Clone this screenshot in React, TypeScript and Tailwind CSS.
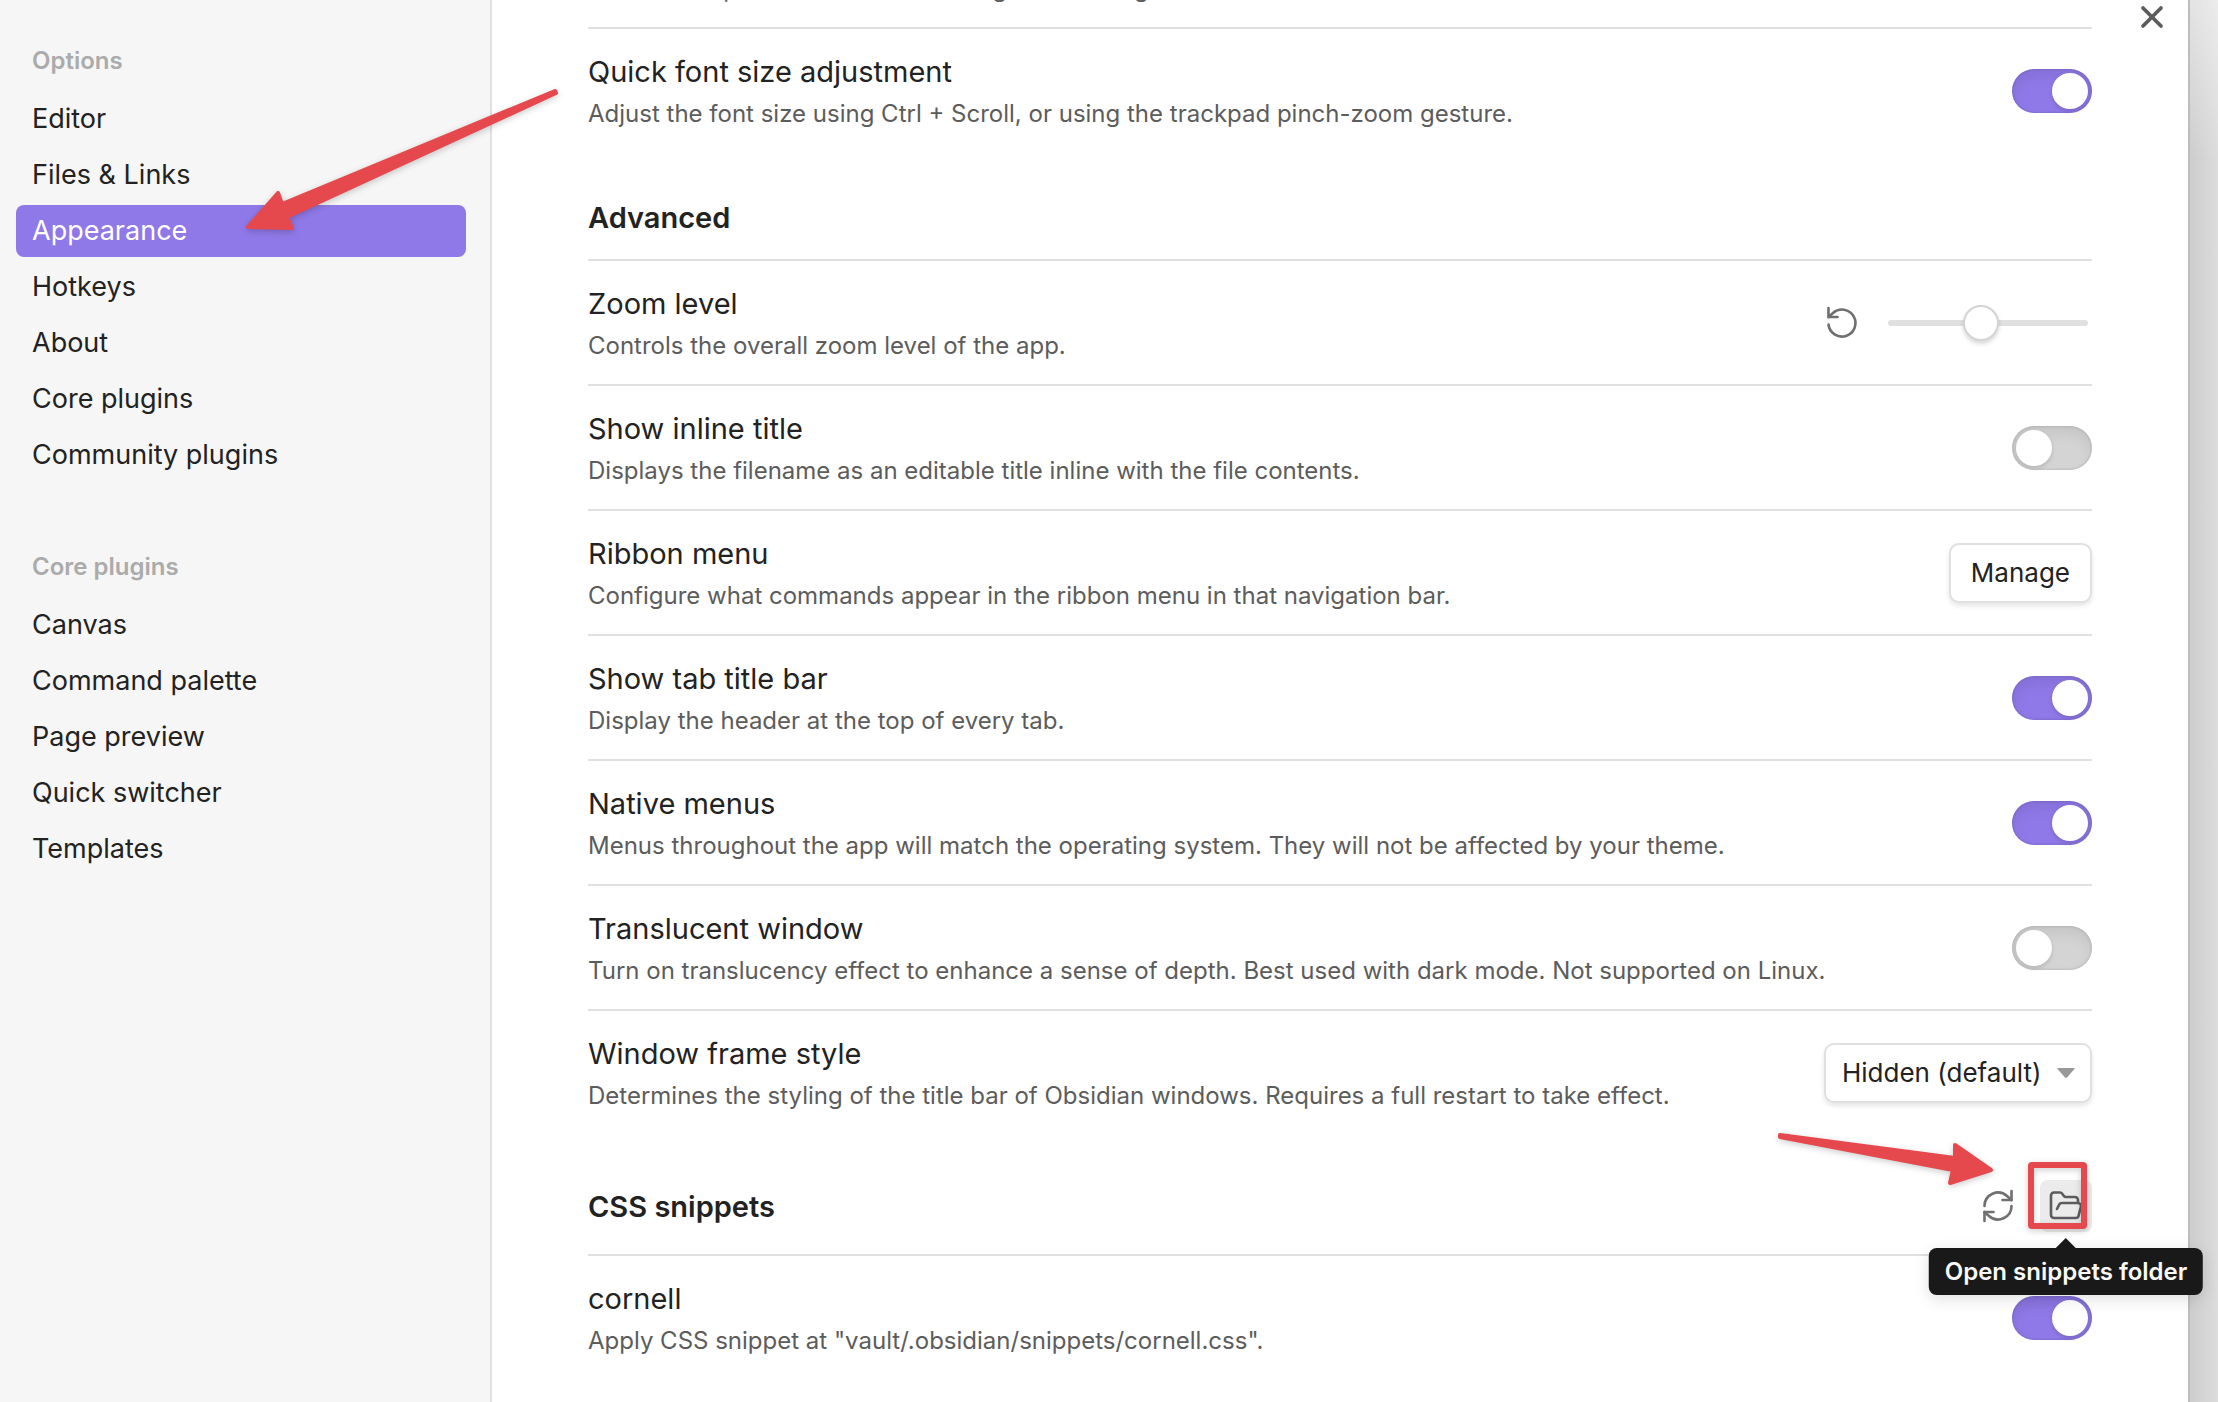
import { useState } from "react";
import type { ReactNode } from "react";
import { X } from "lucide-react";

const optionItems = ["Editor", "Files & Links", "Appearance", "Hotkeys", "About", "Core plugins", "Community plugins"];
const pluginItems = ["Canvas", "Command palette", "Page preview", "Quick switcher", "Templates"];

function NavGroup({ title, items, active }: { title: string; items: string[]; active?: string }) {
  return (
    <section>
      <h2 className="mb-2 px-4 py-2 text-2xl/[32px] font-semibold text-[#ababab]">{title}</h2>
      <ul className="flex flex-col gap-1">
        {items.map((item) => (
          <li key={item}>
            <a
              href="#"
              aria-current={item === active ? "page" : undefined}
              className={
                item === active
                  ? "block rounded-lg bg-[#8f79e8] px-4 py-2 text-[27px]/[36px] text-white"
                  : "block rounded-lg px-4 py-2 text-[27px]/[36px] text-[#222222]"
              }
            >
              {item}
            </a>
          </li>
        ))}
      </ul>
    </section>
  );
}

function Setting({ name, desc, children }: { name: string; desc: string; children?: ReactNode }) {
  return (
    <div className="flex items-center justify-between border-t-2 border-[#e0e0e0] py-[23px]">
      <div>
        <h3 className="text-[29px]/[39px] text-[#222222]">{name}</h3>
        <p className="mt-[7px] text-2xl/[31px] text-[#5c5c5c]">{desc}</p>
      </div>
      <div className="flex shrink-0 items-center">{children}</div>
    </div>
  );
}

function Toggle({ label, initial = false }: { label: string; initial?: boolean }) {
  const [on, setOn] = useState(initial);
  return (
    <input
      type="checkbox"
      role="switch"
      aria-label={label}
      checked={on}
      onChange={() => setOn(!on)}
      className="flex h-11 w-20 appearance-none items-center rounded-full bg-[#d4d4d4] p-1 shadow-[inset_0_8px_14px_rgba(0,0,0,0.07),inset_0_0_3px_rgba(0,0,0,0.2)] before:size-9 before:rounded-full before:bg-white before:shadow-[0_2px_4px_rgba(0,0,0,0.15)] checked:bg-[#8f79e8] checked:before:translate-x-9"
    />
  );
}

function StrokeIcon({ children }: { children: ReactNode }) {
  return (
    <svg viewBox="0 0 24 24" className="size-9 fill-none stroke-current stroke-[1.75]" strokeLinecap="round" strokeLinejoin="round" aria-hidden="true">
      {children}
    </svg>
  );
}

function SnippetTooltip() {
  return (
    <div role="tooltip" className="absolute top-full left-1/2 z-10 mt-4 -translate-x-1/2 rounded-lg bg-[#191919] px-4 py-2 text-2xl/[31px] font-semibold whitespace-nowrap text-[#fafafa] shadow-[0_4px_16px_rgba(0,0,0,0.12)]">
      <svg viewBox="0 0 20 10" className="absolute -top-[10px] left-1/2 h-[10px] w-5 -translate-x-1/2 fill-[#191919]" aria-hidden="true">
        <path d="M0 10L10 0l10 10z" />
      </svg>
      Open snippets folder
    </div>
  );
}

function Annotations() {
  return (
    <svg viewBox="0 0 2218 1402" className="pointer-events-none absolute top-0 left-0 h-[1402px] w-[2218px] fill-[#e5484d] stroke-[#e5484d] drop-shadow-[0_2px_3px_rgba(0,0,0,0.2)]" strokeWidth="4" strokeLinejoin="round" aria-hidden="true">
      <path d="M555 91L282 204l-4-11-30 34 44 1-5-11L556 93z" />
      <path d="M1780 1135L1955 1158v-13l36 25-41 13 3-13L1780 1137z" />
      <rect x="2031" y="1165" width="53" height="61" rx="1" fill="none" strokeWidth="6" />
    </svg>
  );
}

export default function App() {
  const [zoom, setZoom] = useState(46);
  return (
    <div className="relative flex h-screen overflow-hidden bg-white font-['Inter',sans-serif]">
      <nav aria-label="Settings" className="flex w-[492px] shrink-0 flex-col gap-[62px] border-r-2 border-[#e0e0e0] bg-[#f6f6f6] pt-[37px] pr-6 pl-4">
        <NavGroup title="Options" items={optionItems} active="Appearance" />
        <NavGroup title="Core plugins" items={pluginItems} />
      </nav>

      <main className="relative min-w-0 flex-1 bg-white px-24">
        <button type="button" aria-label="Close" className="absolute top-[-1px] right-[18px] text-[#5c5c5c]">
          <X className="size-9" strokeWidth={2.5} />
        </button>

        <div className="-mt-[98px]">
          <Setting name="Font size" desc="Font size in pixels that affects editing and reading views." />
          <Setting name="Quick font size adjustment" desc="Adjust the font size using Ctrl + Scroll, or using the trackpad pinch-zoom gesture.">
            <Toggle label="Quick font size adjustment" initial />
          </Setting>

          <h2 className="pt-[46px] pb-[22px] text-[29px]/[39px] font-semibold text-[#222222]">Advanced</h2>

          <Setting name="Zoom level" desc="Controls the overall zoom level of the app.">
            <button type="button" aria-label="Restore default" className="mr-5 p-2 text-[#707070]">
              <StrokeIcon>
                <path d="M3 2v6h6" />
                <path d="M3 13a9 9 0 1 0 3-7.7L3 8" />
              </StrokeIcon>
            </button>
            <input
              type="range"
              aria-label="Zoom level"
              value={zoom}
              onChange={(e) => setZoom(Number(e.target.value))}
              className="mr-1 h-[6px] w-[200px] appearance-none rounded-full bg-[#e0e0e0] [&::-webkit-slider-thumb]:size-9 [&::-webkit-slider-thumb]:appearance-none [&::-webkit-slider-thumb]:rounded-full [&::-webkit-slider-thumb]:border-2 [&::-webkit-slider-thumb]:border-[#d4d4d4] [&::-webkit-slider-thumb]:bg-white [&::-webkit-slider-thumb]:shadow-[0_3px_4px_rgba(0,0,0,0.15)]"
            />
          </Setting>
          <Setting name="Show inline title" desc="Displays the filename as an editable title inline with the file contents.">
            <Toggle label="Show inline title" />
          </Setting>
          <Setting name="Ribbon menu" desc="Configure what commands appear in the ribbon menu in that navigation bar.">
            <button type="button" className="h-15 rounded-[10px] border-2 border-[#e0e0e0] bg-white px-5 text-[26px]/[34px] text-[#222222] shadow-[0_3px_5px_rgba(0,0,0,0.1)]">
              Manage
            </button>
          </Setting>
          <Setting name="Show tab title bar" desc="Display the header at the top of every tab.">
            <Toggle label="Show tab title bar" initial />
          </Setting>
          <Setting name="Native menus" desc="Menus throughout the app will match the operating system. They will not be affected by your theme.">
            <Toggle label="Native menus" initial />
          </Setting>
          <Setting name="Translucent window" desc="Turn on translucency effect to enhance a sense of depth. Best used with dark mode. Not supported on Linux.">
            <Toggle label="Translucent window" />
          </Setting>
          <Setting name="Window frame style" desc="Determines the styling of the title bar of Obsidian windows. Requires a full restart to take effect.">
            <div className="relative flex items-center">
              <select aria-label="Window frame style" className="h-15 appearance-none rounded-[10px] border-2 border-[#e0e0e0] bg-white pr-12 pl-4 text-[26px]/[34px] text-[#222222] shadow-[0_3px_5px_rgba(0,0,0,0.1)]">
                <option>Hidden (default)</option>
                <option>Obsidian frame</option>
                <option>Native frame</option>
              </select>
              <svg viewBox="0 0 18 10" className="pointer-events-none absolute right-[17px] h-[10px] w-[18px] fill-[#999999]" aria-hidden="true">
                <path d="M1 0h16a.6.6 0 0 1 .5 1L10 9.500a1.500 1.500 0 0 1-2 0L.5 1A.6.6 0 0 1 1 0z" />
              </svg>
            </div>
          </Setting>

          <div className="flex items-center justify-between pt-[46px] pb-[22px]">
            <h2 className="text-[29px]/[39px] font-semibold text-[#222222]">CSS snippets</h2>
            <div className="flex gap-4">
              <button type="button" aria-label="Reload snippets" className="p-2 text-[#707070]">
                <StrokeIcon>
                  <path d="M21 2v6h-6" />
                  <path d="M3 12a9 9 0 0 1 15-6.700L21 8" />
                  <path d="M3 22v-6h6" />
                  <path d="M21 12a9 9 0 0 1-15 6.700L3 16" />
                </StrokeIcon>
              </button>
              <div className="relative">
                <button type="button" aria-label="Open snippets folder" className="block rounded-lg bg-[#ebebeb] p-2 text-[#5c5c5c]">
                  <StrokeIcon>
                    <path d="m6 14 1.450-2.900A2 2 0 0 1 9.240 10H20a2 2 0 0 1 1.940 2.500l-1.550 6a2 2 0 0 1-1.940 1.500H4a2 2 0 0 1-2-2V5c0-1.100.9-2 2-2h3.930a2 2 0 0 1 1.660.9l.82 1.200a2 2 0 0 0 1.660.9H18a2 2 0 0 1 2 2v2" />
                  </StrokeIcon>
                </button>
                <SnippetTooltip />
              </div>
            </div>
          </div>

          <Setting name="cornell" desc={'Apply CSS snippet at "vault/.obsidian/snippets/cornell.css".'}>
            <Toggle label="cornell" initial />
          </Setting>
        </div>
      </main>

      <div className="w-[30px] shrink-0 border-l-2 border-[#bdbdbd] bg-linear-to-r from-[#cdcdcd] to-[#dcdcdc]">
        <div className="h-40 bg-linear-to-b from-white/45 to-transparent" />
      </div>

      <Annotations />
    </div>
  );
}
